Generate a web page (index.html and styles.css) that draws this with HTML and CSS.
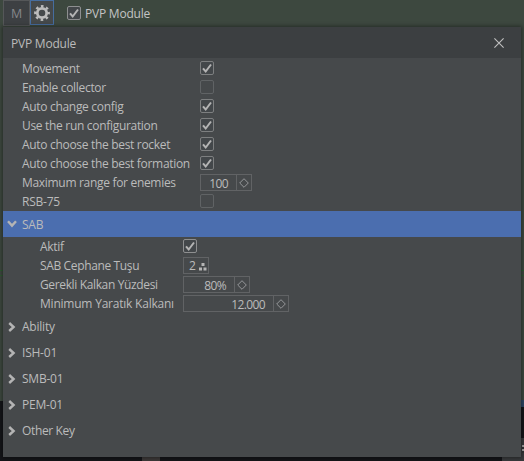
FILE: index.html
```
<!DOCTYPE html>
<html lang="en">
<head>
<meta charset="utf-8">
<title>PVP Module</title>
<link rel="stylesheet" href="styles.css">
</head>
<body>
<svg class="defs" width="0" height="0">
  <symbol id="tick" viewBox="0 0 14 14"><path d="M3 7.3 5.7 10.5 11 3.5"/></symbol>
  <symbol id="diamond" viewBox="0 0 10 10"><path d="M5 .7 9.3 5 5 9.3.7 5Z"/></symbol>
  <symbol id="chevron" viewBox="0 0 10 10"><path d="M2.2 1 6.6 5 2.2 9"/></symbol>
</svg>
<div class="backdrop">
  <i class="line line-a"></i><i class="line line-b"></i>
  <i class="floor"></i><i class="tile"></i><i class="grey"></i><i class="blue"></i><i class="spark"></i>
</div>
<header class="toolbar">
  <div class="tool">M</div>
  <div class="tool active">
    <svg width="18" height="18" viewBox="0 0 18 18"><circle class="ring" cx="9" cy="9" r="4.7"/><circle class="teeth" cx="9" cy="9" r="6.7"/></svg>
  </div>
  <span class="check lit"><svg><use href="#tick"/></svg></span>
  <span class="title">PVP Module</span>
</header>
<main class="panel">
  <div class="head"><span>PVP Module</span><svg class="close" width="10" height="10" viewBox="0 0 10 10"><path d="M.4.4 9.6 9.6M9.6.4.4 9.6"/></svg></div>
  <div class="rows">
    <div class="row"><label>Movement</label><span class="check"><svg><use href="#tick"/></svg></span></div>
    <div class="row"><label>Enable collector</label><span class="check off"></span></div>
    <div class="row"><label>Auto change config</label><span class="check"><svg><use href="#tick"/></svg></span></div>
    <div class="row"><label>Use the run configuration</label><span class="check"><svg><use href="#tick"/></svg></span></div>
    <div class="row"><label>Auto choose the best rocket</label><span class="check"><svg><use href="#tick"/></svg></span></div>
    <div class="row"><label>Auto choose the best formation</label><span class="check"><svg><use href="#tick"/></svg></span></div>
    <div class="row"><label>Maximum range for enemies</label><span class="spin w-range"><b>100</b><i><svg><use href="#diamond"/></svg></i></span></div>
    <div class="row"><label class="plain">RSB-75</label><span class="check off"></span></div>
  </div>
  <div class="section open"><svg class="chev"><use href="#chevron"/></svg><span>SAB</span></div>
  <div class="rows sub">
    <div class="row"><label>Aktif</label><span class="check lit"><svg><use href="#tick"/></svg></span></div>
    <div class="row"><label class="tight">SAB Cephane Tuşu</label><span class="key">2<svg width="8" height="8" viewBox="0 0 8 8"><path d="M2.5 0h3v3h-3zM0 4.5h3v3H0zM4.5 4.5h3v3h-3z"/></svg></span></div>
    <div class="row"><label class="tight">Gerekli Kalkan Yüzdesi</label><span class="spin w-percent"><b>80%</b><i><svg><use href="#diamond"/></svg></i></span></div>
    <div class="row"><label class="plain">Minimum Yaratık Kalkanı</label><span class="spin w-shield"><b>12.000</b><i><svg><use href="#diamond"/></svg></i></span></div>
  </div>
  <div class="section"><svg class="chev"><use href="#chevron"/></svg><span>Ability</span></div>
  <div class="section"><svg class="chev"><use href="#chevron"/></svg><span>ISH-01</span></div>
  <div class="section"><svg class="chev"><use href="#chevron"/></svg><span>SMB-01</span></div>
  <div class="section"><svg class="chev"><use href="#chevron"/></svg><span>PEM-01</span></div>
  <div class="section"><svg class="chev"><use href="#chevron"/></svg><span class="tight">Other Key</span></div>
</main>
</body>
</html>
```
FILE: styles.css
```
* { box-sizing: border-box; }
body {
  margin: 0;
  width: 524px;
  height: 461px;
  overflow: hidden;
  position: relative;
  background: #3d483f;
  color: #bbbbbb;
  font: 12px/19px "Open Sans", "Noto Sans", sans-serif;
  letter-spacing: -0.22px;
}
svg { fill: none; stroke: #b4b4b4; flex: none; }
.defs { position: absolute; }

.backdrop { position: absolute; inset: 0; }
.backdrop i { position: absolute; }
.line { left: 0; width: 524px; height: 1px; background: #2e5a32; }
.line-a { top: 270px; }
.line-b { top: 275px; }
.floor { left: 0; top: 401px; width: 524px; height: 60px; background: #141519; }
.tile { left: 142px; top: 457px; width: 18px; height: 4px; background: #3c3938; }
.grey { left: 502px; top: 438px; width: 22px; height: 23px; background: #383a3c; }
.blue { left: 521px; top: 400px; width: 3px; height: 7px; background: #2d4664; }
.spark { left: 522px; top: 445px; width: 2px; height: 8px; background: repeating-linear-gradient(#a0a0a0 0 2px, #303234 2px 4px); }

.toolbar { position: relative; display: flex; align-items: flex-start; height: 27px; padding-left: 3px; }
.tool {
  width: 27px;
  height: 26px;
  display: grid;
  place-items: center;
  background: #3d4043;
  border: 1px solid #555759;
  color: #85878a;
  font-size: 12.5px;
}
.tool.active { width: 24px; height: 25px; background: #45494b; border-color: #466d9f; }
.ring { stroke: #bcbcbc; stroke-width: 2.8; }
.teeth { stroke: #bcbcbc; stroke-width: 2.4; stroke-dasharray: 2.6 2.662; stroke-dashoffset: 1.3; }
.toolbar .check { margin: 6px 4px 0 13px; }
.title { padding-top: 4px; color: #c4c4c4; }

.panel {
  position: relative;
  width: 518px;
  height: 430px;
  margin-left: 3px;
  background: #46494b;
  box-shadow: 0 0 4px 1px rgba(0, 0, 0, .4);
}
.head {
  height: 31px;
  padding: 2px 17px 0 8px;
  display: flex;
  align-items: center;
  justify-content: space-between;
  background: #3c3f41;
}
.close { margin-top: -1px; stroke: #c0c0c0; stroke-width: 1.1; }
.rows { padding: 1px 0 0 19px; }
.row { display: flex; height: 19px; align-items: center; }
.row .check { margin-bottom: 1px; }
.row label { width: 178px; white-space: nowrap; margin-top: -1px; letter-spacing: -.31px; }
.sub { padding: 0 0 1px 37px; }
.sub label { width: 143px; }
.row .plain { letter-spacing: -.22px; }
.row .tight, .section .tight { letter-spacing: -.36px; }

.check { width: 14px; height: 14px; border: 1px solid #7d7f80; border-radius: 2px; background: #43474a; flex: none; }
.check svg { display: block; width: 14px; height: 14px; margin: -1px; stroke-width: 2; }
.check.off { border-color: #606365; background: none; }
.check.lit { border-color: #8e8f90; }

.spin { height: 17px; display: flex; border: 1px solid #616365; line-height: 17px; }
.spin b { flex: 1; text-align: right; padding-right: 8px; font-weight: 400; letter-spacing: -.6px; }
.spin i { width: 15px; border-left: 1px solid #616365; display: grid; place-items: center; }
.spin svg { width: 10px; height: 10px; stroke: #96989a; }
.w-range { width: 52px; }
.w-percent { width: 67px; }
.w-shield { width: 106px; }
.key { width: 26px; height: 17px; padding-left: 5px; display: flex; gap: 3px; border: 1px solid #616365; line-height: 16px; }
.key svg { margin-top: 5px; fill: #b5b5b5; stroke: none; }

.section { display: flex; height: 26px; align-items: center; padding-left: 4px; }
.section span { padding-left: 5px; margin-top: -2px; }
.section.open span { margin-top: 0; }
.chev { width: 10px; height: 10px; stroke-width: 2.4; }
.open { background: #4b6eaf; }
.open .chev { transform: rotate(90deg); }
```
